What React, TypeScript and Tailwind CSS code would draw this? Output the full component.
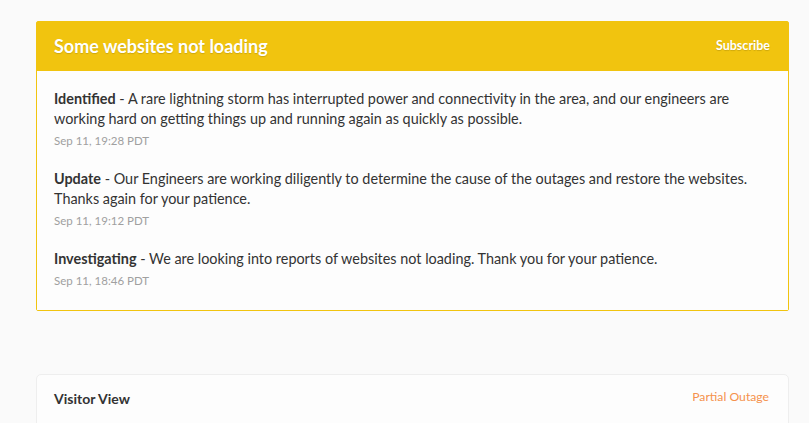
import React from "react";

const updates = [
  {
    label: "Identified",
    text: "A rare lightning storm has interrupted power and connectivity in the area, and our engineers are working hard on getting things up and running again as quickly as possible.",
    time: "Sep 11, 19:28 PDT",
  },
  {
    label: "Update",
    text: "Our Engineers are working diligently to determine the cause of the outages and restore the websites. Thanks again for your patience.",
    time: "Sep 11, 19:12 PDT",
  },
  {
    label: "Investigating",
    text: "We are looking into reports of websites not loading. Thank you for your patience.",
    time: "Sep 11, 18:46 PDT",
  },
];

export default function App() {
  return (
    <div
      className="h-[423px] w-[809px] bg-[#fafafa] pt-[21px] pl-[36px] overflow-hidden"
      style={{ fontFamily: "Lato, 'Open Sans', sans-serif" }}
    >
      <div className="w-[753px] border border-[#f1c40f] rounded-[2px]">
        <div className="h-[49px] bg-[#f1c40f] flex items-center justify-between pl-[17px] pr-[18px]">
          <div className="text-white font-bold text-[18px] [text-shadow:0_1px_1px_rgba(0,0,0,0.15)]">
            Some websites not loading
          </div>
          <div className="text-white font-bold text-[12.5px] [text-shadow:0_1px_1px_rgba(0,0,0,0.15)]">
            Subscribe
          </div>
        </div>
        <div className="bg-[#fdfdfd] pl-[17px] pr-[20px] pt-[18px] pb-[21px] flex flex-col gap-[20px]">
          {updates.map((u) => (
            <div key={u.label}>
              <div className="text-[14.4px] leading-[20px] text-[#333333]">
                <span className="font-bold">{u.label}</span> - {u.text}
              </div>
              <div className="text-[11.5px] leading-[16px] mt-[4px] text-[#a0a0a0]">{u.time}</div>
            </div>
          ))}
        </div>
      </div>
      <div className="mt-[63px] w-[753px] h-[80px] border border-[#eeeeee] rounded-[5px] bg-[#fdfdfd] flex items-start justify-between pl-[17px] pr-[19px] pt-[13px]">
        <div className="text-[14px] font-bold text-[#333333]">Visitor View</div>
        <div className="text-[12.2px] text-[#f5924c]">Partial Outage</div>
      </div>
    </div>
  );
}
